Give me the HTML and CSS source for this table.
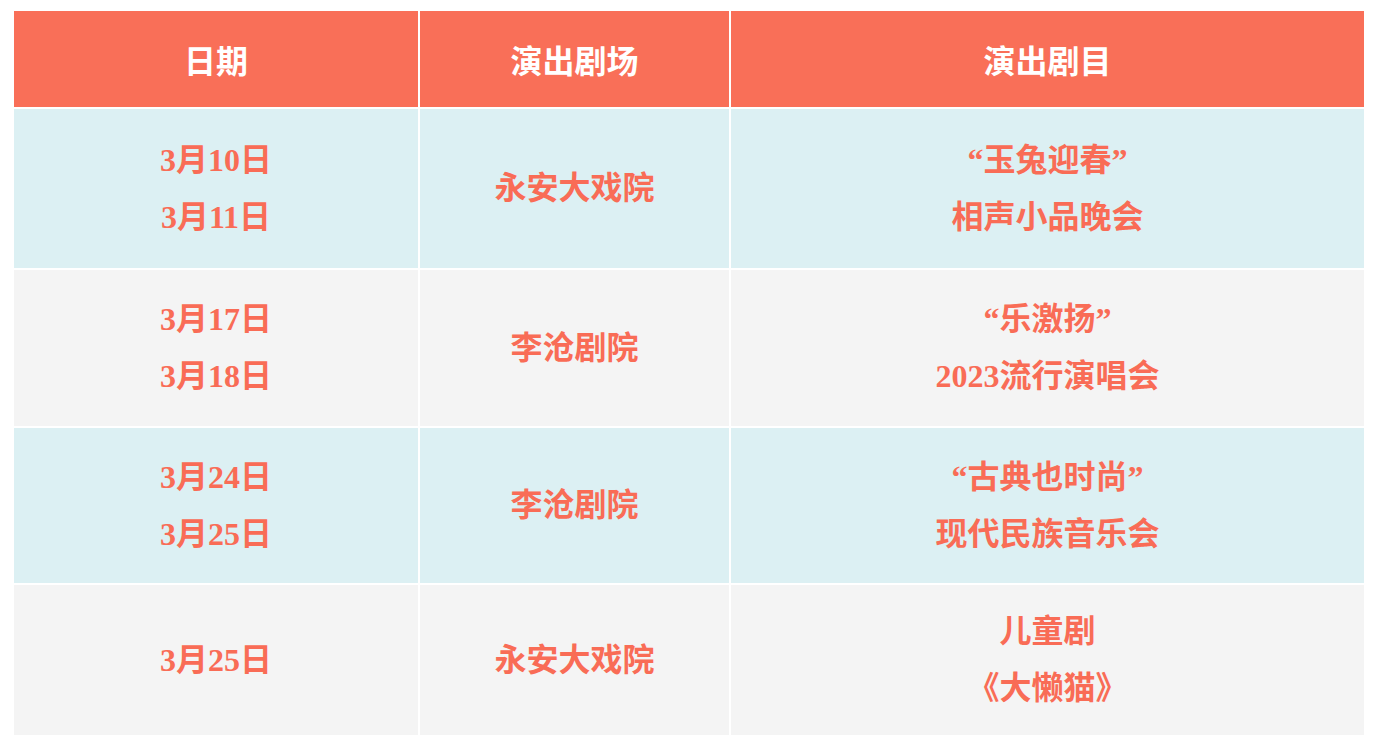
FILE: index.html
```html
<!DOCTYPE html>
<html lang="zh-CN">
<head>
<meta charset="utf-8">
<title>演出安排</title>
<link rel="stylesheet" href="styles.css">
</head>
<body>
<div class="page">
  <div class="table">
    <div class="cell head">日期</div>
    <div class="cell head">演出剧场</div>
    <div class="cell head">演出剧目</div>

    <div class="cell blue"><p>3月10日</p><p>3月11日</p></div>
    <div class="cell blue"><p>永安大戏院</p></div>
    <div class="cell blue"><p>“玉兔迎春”</p><p>相声小品晚会</p></div>

    <div class="cell grey"><p>3月17日</p><p>3月18日</p></div>
    <div class="cell grey"><p>李沧剧院</p></div>
    <div class="cell grey"><p>“乐激扬”</p><p>2023流行演唱会</p></div>

    <div class="cell blue"><p>3月24日</p><p>3月25日</p></div>
    <div class="cell blue"><p>李沧剧院</p></div>
    <div class="cell blue"><p>“古典也时尚”</p><p>现代民族音乐会</p></div>

    <div class="cell grey"><p>3月25日</p></div>
    <div class="cell grey"><p>永安大戏院</p></div>
    <div class="cell grey"><p>儿童剧</p><p>《大懒猫》</p></div>
  </div>
</div>
</body>
</html>
```

FILE: styles.css
```css
html, body {
  margin: 0;
  padding: 0;
  background: #ffffff;
  overflow: hidden;
}

.page {
  padding: 11px 14px 0 14px;
}

.table {
  display: grid;
  grid-template-columns: 404px 309px 633px;
  grid-template-rows: 96px 159px 156px 155px 150px;
  gap: 2px;
  width: 1350px;
  background: #ffffff;
  font-family: "Liberation Serif", "Noto Sans CJK SC", serif;
  font-weight: 700;
  font-size: 32px;
  color: #f96c56;
}

.cell {
  display: flex;
  flex-direction: column;
  align-items: center;
  justify-content: center;
  text-align: center;
}

.cell p {
  margin: 0;
  line-height: 57px;
}

.head {
  background: #f96f58;
  color: #ffffff;
  font-family: "Noto Sans CJK SC", sans-serif;
}

.blue {
  background: #dcf0f3;
}

.grey {
  background: #f4f4f4;
}
```
